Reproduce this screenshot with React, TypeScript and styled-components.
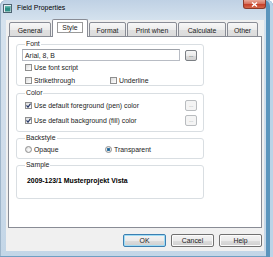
import React from "react";
import styled, { createGlobalStyle } from "styled-components";

const GlobalStyle = createGlobalStyle`
  html, body {
    margin: 0;
    padding: 0;
    width: 273px;
    height: 257px;
    overflow: hidden;
    background: #fff;
  }
  body {
    font-family: "Liberation Sans", Arial, sans-serif;
    font-size: 6.9px;
    color: #1b1b1b;
  }
`;

const TABS = ["General", "Style", "Format", "Print when", "Calculate", "Other"];
const TAB_WIDTHS = [42, 36, 37, 50, 48, 31];

export default function App() {
  return (
    <>
      <GlobalStyle />
      <Window>
        <TitleBar>
          <AppIcon width="9" height="9" viewBox="0 0 9 9">
            <rect x="0.5" y="0.5" width="8" height="8" fill="#e9eef2" stroke="#4d6472" />
            <rect x="2" y="2" width="5.5" height="5.5" fill="#2f8f86" />
            <rect x="2" y="2" width="5.5" height="1.5" fill="#63b9ad" />
          </AppIcon>
          <Title>Field Properties</Title>
          <CloseButton>
            <svg width="7" height="5" viewBox="0 0 7 5">
              <path d="M1 0.5 L6 4.5 M6 0.5 L1 4.5" stroke="#fff" strokeWidth="1.4" />
            </svg>
          </CloseButton>
        </TitleBar>

        <Client>
          <TabRow>
            {TABS.map((t, i) => (
              <Tab key={t} $active={t === "Style"} $w={TAB_WIDTHS[i]}>
                {t === "Style" ? <Focus>{t}</Focus> : t}
              </Tab>
            ))}
          </TabRow>

          <Panel>
            <Group>
              <Legend>Font</Legend>
              <InputRow>
                <TextBox>Arial, 8, B</TextBox>
                <DotsButton>...</DotsButton>
              </InputRow>
              <OptionRow>
                <CheckPair>
                  <Check />
                  Use font script
                </CheckPair>
              </OptionRow>
              <OptionRow $cols="85px 1fr">
                <CheckPair>
                  <Check />
                  Strikethrough
                </CheckPair>
                <CheckPair>
                  <Check />
                  Underline
                </CheckPair>
              </OptionRow>
            </Group>

            <Group $gapTop={3} $padTop={2} $padBottom={4}>
              <Legend>Color</Legend>
              <ColorRow>
                <CheckPair>
                  <Check>
                    <CheckMark />
                  </Check>
                  Use default foreground (pen) color
                </CheckPair>
                <DotsButton $disabled>...</DotsButton>
              </ColorRow>
              <ColorRow>
                <CheckPair>
                  <Check>
                    <CheckMark />
                  </Check>
                  Use default background (fill) color
                </CheckPair>
                <DotsButton $disabled>...</DotsButton>
              </ColorRow>
            </Group>

            <Group $gapTop={2} $padTop={2} $padBottom={4}>
              <Legend>Backstyle</Legend>
              <OptionRow $cols="80px 1fr" $first>
                <CheckPair>
                  <Radio />
                  Opaque
                </CheckPair>
                <CheckPair>
                  <Radio $checked />
                  Transparent
                </CheckPair>
              </OptionRow>
            </Group>

            <Group $gapTop={2} $padTop={7} $padBottom={12}>
              <Legend>Sample</Legend>
              <SampleText>2009-123/1 Musterprojekt Vista</SampleText>
            </Group>
          </Panel>

          <ButtonRow>
            <DialogButton $default>OK</DialogButton>
            <DialogButton>Cancel</DialogButton>
            <DialogButton>Help</DialogButton>
          </ButtonRow>
        </Client>
      </Window>
    </>
  );
}

function CheckMark() {
  return (
    <svg width="5" height="5" viewBox="0 0 5 5">
      <path d="M0.5 2.4 L2 4.2 L4.6 0.6" fill="none" stroke="#2a3b6a" strokeWidth="1.2" />
    </svg>
  );
}

const Window = styled.div`
  width: 273px;
  height: 257px;
  box-sizing: border-box;
  display: flex;
  flex-direction: column;
  border-radius: 6px 6px 0 0;
  background: linear-gradient(to bottom, #bfd1e4 0%, #d5e2ee 8%, #cfdcea 60%, #c3d6e7 100%);
  box-shadow: inset -3px 0 0 #bcd4e7, inset -7px 0 0 #5b95bd, inset 0 -1px 0 #6f9fc2,
    inset 1px 0 0 #9fb6cb;
`;

const TitleBar = styled.div`
  height: 20px;
  display: flex;
  align-items: flex-start;
  padding-left: 3px;
`;

const AppIcon = styled.svg`
  margin-top: 4px;
  flex-shrink: 0;
`;

const Title = styled.span`
  margin-top: 3px;
  margin-left: 5px;
  line-height: 10px;
  color: #000;
`;

const CloseButton = styled.div`
  margin-left: auto;
  margin-right: 7px;
  width: 23px;
  height: 9px;
  box-sizing: border-box;
  display: flex;
  align-items: center;
  justify-content: center;
  border: 1px solid #8a3b2c;
  border-top: none;
  border-radius: 0 0 3px 3px;
  background: linear-gradient(to bottom, #e9a99a 0%, #d8735e 45%, #c6402a 55%, #d4684a 100%);
`;

const Client = styled.div`
  flex: 1;
  display: flex;
  flex-direction: column;
  margin: 0 9px 6px 6px;
  padding: 2px 2px 0 2px;
  background: #f0f0f0;
`;

const TabRow = styled.div`
  height: 15px;
  display: flex;
  align-items: flex-end;
  gap: 1px;
  padding-left: 1px;
  margin-bottom: -1px;
  position: relative;
  z-index: 1;
`;

const Tab = styled.div<{ $active?: boolean; $w: number }>`
  width: ${(p) => p.$w}px;
  height: ${(p) => (p.$active ? 18 : 15)}px;
  box-sizing: border-box;
  display: flex;
  align-items: center;
  justify-content: center;
  padding-top: ${(p) => (p.$active ? 0 : 1)}px;
  border: 1px solid #898c95;
  border-bottom: ${(p) => (p.$active ? "none" : "1px solid #898c95")};
  border-radius: 2px 2px 0 0;
  background: ${(p) =>
    p.$active
      ? "#fff"
      : "linear-gradient(to bottom, #f7f7f7 0%, #ececec 50%, #e0e0e0 51%, #dcdcdc 100%)"};
  color: #1b1b1b;
  white-space: nowrap;
`;

const Focus = styled.span`
  border: 1px solid #9a9a9a;
  padding: 1px 4px;
  line-height: 7px;
  margin-bottom: 2px;
`;

const Panel = styled.div`
  height: 192px;
  box-sizing: border-box;
  background: #fff;
  border: 1px solid #898c95;
  padding: 3px 0 0 7px;
  display: flex;
  flex-direction: column;
`;

const Group = styled.fieldset<{ $gapTop?: number; $padTop?: number; $padBottom?: number }>`
  width: 188px;
  box-sizing: border-box;
  margin: ${(p) => p.$gapTop ?? 0}px 0 0 0;
  padding: ${(p) => p.$padTop ?? 1}px 5px ${(p) => p.$padBottom ?? 0}px 5px;
  border: 1px solid #d9dee2;
  border-radius: 3px;
  display: flex;
  flex-direction: column;
`;

const Legend = styled.legend`
  padding: 0 1px;
  margin-left: 3px;
  line-height: 8px;
  color: #1b1b1b;
`;

const InputRow = styled.div`
  display: flex;
  align-items: center;
  gap: 5px;
  height: 12px;
`;

const TextBox = styled.div`
  width: 158px;
  height: 12px;
  box-sizing: border-box;
  border: 1px solid #b8bcc4;
  border-top-color: #9da1a8;
  padding-left: 2px;
  display: flex;
  align-items: center;
  background: #fff;
`;

const DotsButton = styled.div<{ $disabled?: boolean }>`
  width: 12px;
  height: 11px;
  box-sizing: border-box;
  flex-shrink: 0;
  border: 1px solid ${(p) => (p.$disabled ? "#b9bcbf" : "#7b7f84")};
  border-radius: 2px;
  background: ${(p) =>
    p.$disabled
      ? "#f4f4f4"
      : "linear-gradient(to bottom, #f6f6f6 0%, #ebebeb 50%, #dcdcdc 51%, #d2d2d2 100%)"};
  color: ${(p) => (p.$disabled ? "#a0a0a0" : "#333")};
  font-size: 6px;
  line-height: 9px;
  text-align: center;
  letter-spacing: -0.3px;
`;

const OptionRow = styled.div<{ $cols?: string; $first?: boolean }>`
  display: grid;
  grid-template-columns: ${(p) => p.$cols ?? "1fr"};
  align-items: center;
  height: 10px;
  margin-top: ${(p) => (p.$first ? 0 : 1)}px;
  padding-left: 3px;

  & + & {
    margin-top: 3px;
  }
`;

const CheckPair = styled.span`
  display: flex;
  align-items: center;
  gap: 2px;
  white-space: nowrap;
`;

const Check = styled.span`
  width: 7px;
  height: 7px;
  box-sizing: border-box;
  flex-shrink: 0;
  display: flex;
  align-items: center;
  justify-content: center;
  border: 1px solid #8f8f8f;
  background: linear-gradient(135deg, #d9d9d9 0%, #f2f2f2 60%, #ffffff 100%);
`;

const ColorRow = styled.div`
  display: flex;
  align-items: center;
  justify-content: space-between;
  height: 13px;
  padding-left: 3px;
  padding-right: 1px;

  & + & {
    margin-top: 2px;
  }
`;

const Radio = styled.span<{ $checked?: boolean }>`
  width: 7px;
  height: 7px;
  box-sizing: border-box;
  border-radius: 50%;
  border: 1px solid #8f8f8f;
  background: ${(p) =>
    p.$checked
      ? "radial-gradient(circle at 50% 50%, #1f5a86 0%, #3c7fae 40%, #e6e6e6 50%, #f4f4f4 100%)"
      : "radial-gradient(circle at 60% 60%, #ffffff 0%, #e4e4e4 60%, #d0d0d0 100%)"};
`;

const SampleText = styled.div`
  padding-left: 5px;
  font-weight: bold;
  line-height: 10px;
  color: #000;
  white-space: nowrap;
`;

const ButtonRow = styled.div`
  display: flex;
  justify-content: flex-end;
  gap: 5px;
  margin-top: 6px;
`;

const DialogButton = styled.div<{ $default?: boolean }>`
  width: 43px;
  height: 13px;
  box-sizing: border-box;
  display: flex;
  align-items: center;
  justify-content: center;
  border: 1px solid ${(p) => (p.$default ? "#3c7fb1" : "#707070")};
  border-radius: 2px;
  background: linear-gradient(to bottom, #f3f3f3 0%, #ebebeb 50%, #dddddd 51%, #cfcfcf 100%);
  box-shadow: ${(p) => (p.$default ? "inset 0 0 0 1px #9fdcf5" : "inset 0 0 0 1px #fbfbfb")};
  color: #1b1b1b;
`;
